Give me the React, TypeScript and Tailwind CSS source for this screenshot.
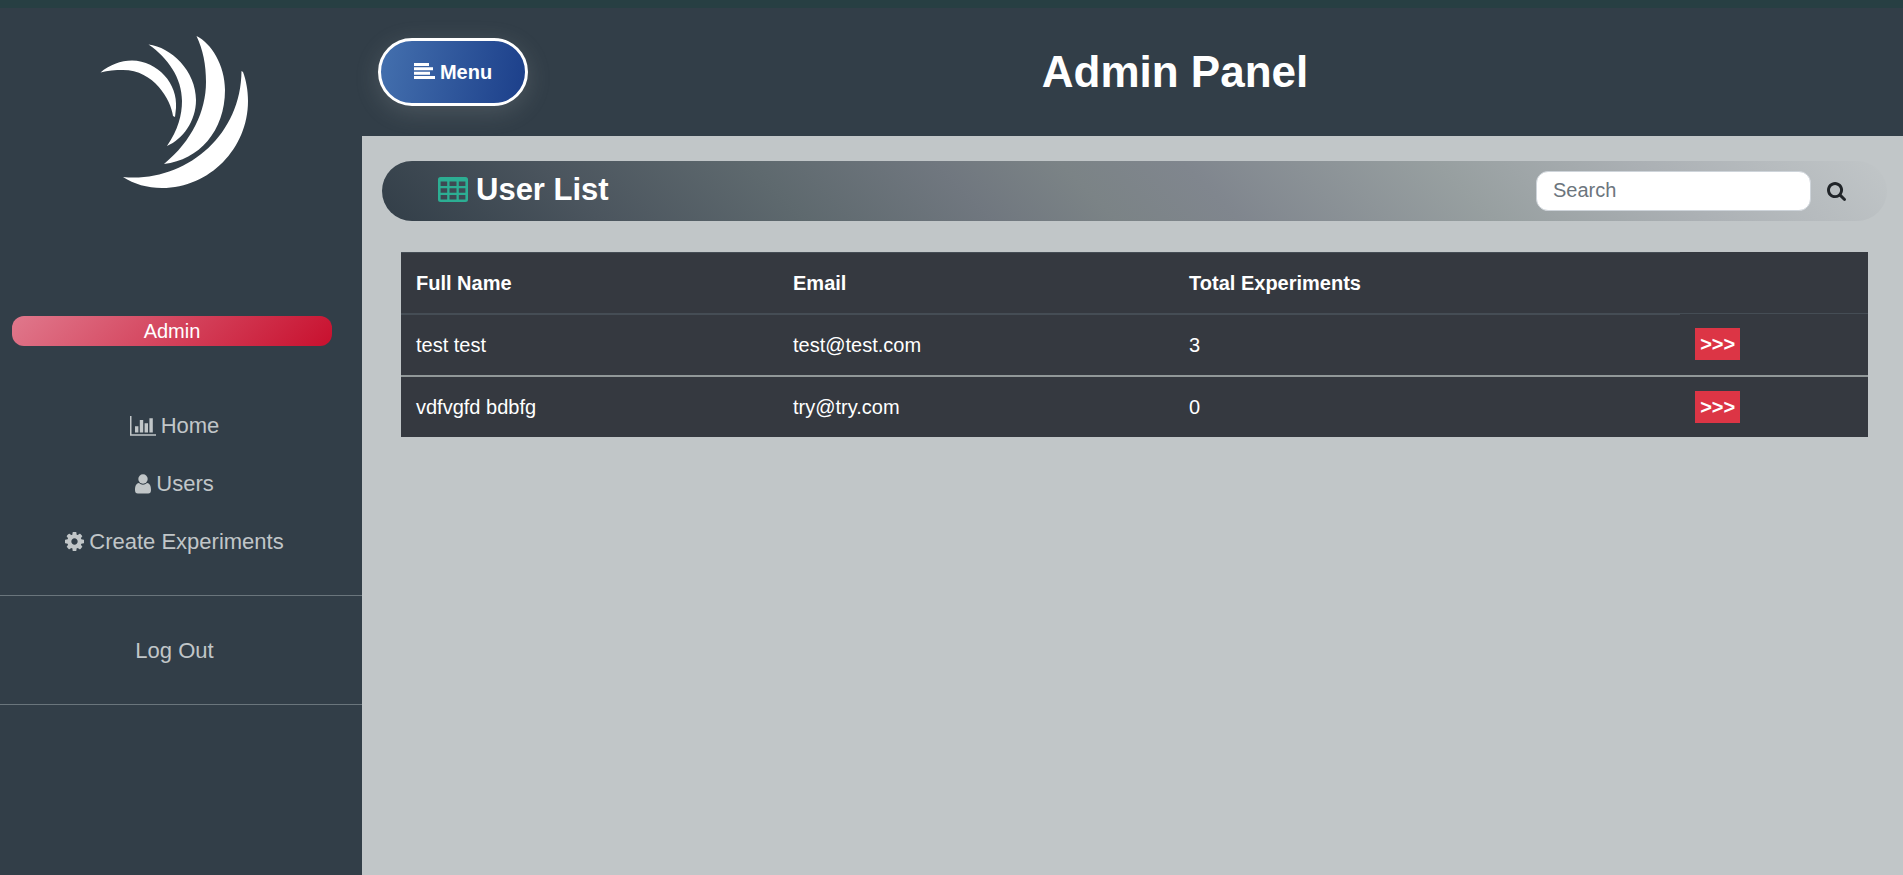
const users = [
  { name: "test test", email: "test@test.com", total: 3 },
  { name: "vdfvgfd bdbfg", email: "try@try.com", total: 0 },
];

function ChartIcon() {
  return (
    <svg viewBox="0 0 26 20" className="h-5 w-[26px]" fill="currentColor" aria-hidden="true">
      <path d="M0 0h1.500v18.200h24.500v1.600h-26zM5 10.200h3.400v6.300h-3.400zM9.800 3.900h3.400v12.600h-3.400zM14.600 7.200h3.400v9.300h-3.400zM19.400 2.200h3.400v14.300h-3.400z" />
    </svg>
  );
}

function UserIcon() {
  return (
    <svg viewBox="0 0 16 20" className="h-5 w-4" fill="currentColor" aria-hidden="true">
      <circle cx="8" cy="5" r="4.700" />
      <path d="M3.900 9Q8 12.600 12.100 9C15 9.300 16 12.500 16 16C16 18.300 15 19.600 13.200 19.600H2.800C1 19.600 0 18.300 0 16C0 12.500 1 9.300 3.900 9Z" />
    </svg>
  );
}

function GearIcon() {
  return (
    <svg viewBox="0 128 1536 1536" className="size-[19px]" fill="currentColor" aria-hidden="true">
      <path d="M1024 896q0-106-75-181t-181-75-181 75-75 181 75 181 181 75 181-75 75-181zM1536 787v222q0 12-8 23t-20 13l-185 28q-19 54-39 91 35 50 107 138 10 12 10 25t-9 23q-27 37-99 108t-94 71q-12 0-26-9l-138-108q-44 23-91 38-16 136-29 186-7 28-36 28h-222q-14 0-24.500-8.500t-11.500-21.500l-28-184q-49-16-90-37l-141 107q-10 9-25 9-14 0-25-11-126-114-165-168-7-10-7-23 0-12 8-23 15-21 51-66.500t54-70.500q-27-50-41-99l-183-27q-13-2-21-12.500t-8-23.500v-222q0-12 8-23t19-13l186-28q14-46 39-92-40-57-107-138-10-12-10-24 0-10 9-23 26-36 98.500-107.500t94.500-71.500q13 0 26 10l138 107q44-23 91-38 16-136 29-186 7-28 36-28h222q14 0 24.500 8.500t11.500 21.500l28 184q49 16 90 37l142-107q9-9 24-9 13 0 25 10 129 119 165 170 7 8 7 22 0 12-8 23-15 21-51 66.500t-54 70.500q26 50 41 98l183 28q13 2 21 12.500t8 23.500z" />
    </svg>
  );
}

function AlignLeftIcon() {
  return (
    <svg viewBox="0 0 21 18" className="h-[18px] w-[21px]" fill="currentColor" aria-hidden="true">
      <path d="M0 0h15v3h-15zM0 4.300h19v3h-19zM0 8.700h16v3h-16zM0 13h21v3h-21z" />
    </svg>
  );
}

function TableIcon() {
  return (
    <svg viewBox="0 0 30 25" className="h-[25px] w-[30px] text-[#2cae93]" fill="currentColor" aria-hidden="true">
      <path
        fillRule="evenodd"
        d="M2.500 0h25a2.500 2.500 0 0 1 2.500 2.500v20a2.500 2.500 0 0 1-2.500 2.500h-25a2.500 2.500 0 0 1-2.500-2.500v-20a2.500 2.500 0 0 1 2.500-2.500zM2.600 4.600v4.400h6.600v-4.400zM11.500 4.600v4.400h7v-4.400zM20.800 4.600v4.400h6.600v-4.400zM2.600 11.300v4.500h6.600v-4.500zM11.500 11.300v4.500h7v-4.500zM20.800 11.300v4.500h6.600v-4.500zM2.600 18v4.500h6.600v-4.500zM11.500 18v4.500h7v-4.500zM20.800 18v4.500h6.600v-4.500z"
      />
    </svg>
  );
}

function SearchIcon() {
  return (
    <svg viewBox="0 128 1664 1664" className="size-[19px]" fill="currentColor" aria-hidden="true">
      <path d="M1152 832q0-185-131.500-316.500t-316.500-131.500-316.500 131.500-131.500 316.500 131.500 316.500 316.500 131.500 316.500-131.500 131.500-316.500zM1664 1664q0 52-38 90t-90 38q-54 0-90-38l-343-342q-179 124-399 124-143 0-273.500-55.500t-225-150-150-225-55.500-273.500 55.500-273.500 150-225 225-150 273.500-55.500 273.500 55.500 225 150 150 225 55.500 273.500q0 220-124 399l343 343q37 37 37 90z" />
    </svg>
  );
}

function Logo() {
  return (
    <svg viewBox="0 0 200 210" className="h-[210px] w-[200px]" fill="#fff" role="img" aria-label="Logo">
      <path d="M20.500 72.500C29 65 41 60.500 52 60.500C78 61 98 84 96 108L95 117L93 116C91 100 74 70 43 70C35 70 28 70.500 20.500 72.500Z" />
      <path d="M68.500 44.500C91 47 116 71 116 100C116 121 103 139 87 146C98 130 102 115 102 101C102 78 88 58 68.500 44.500Z" />
      <path d="M116.500 36C131 43 145 65 145 90C145 131 119 160 84 164C112 141 126 111 126 82C126 64 123 50 116.500 36Z" />
      <path d="M161.500 71L163 72C166 80 168 90 168 101C168 148 130 188 82 188C67 188 54 184 43 177C103 183 161 138 161.500 71Z" />
    </svg>
  );
}

export default function App() {
  return (
    <div className="flex min-h-screen flex-col bg-[#c1c6c8] font-['Liberation_Sans',Arial,sans-serif] text-xl leading-[30px] text-white">
      <div className="h-2 bg-[#273f43]" />
      <div className="flex flex-1">
        <aside className="flex w-[362px] shrink-0 flex-col bg-[#323e48]">
          <div className="-mt-2 pl-20">
            <Logo />
          </div>
          <div className="mt-[106px] mr-[30px] ml-3 rounded-xl bg-linear-[135deg,#e0788c,#c8102e] text-center">
            Admin
          </div>
          <nav className="mt-[63px] flex flex-col text-[22px] leading-[33px] text-[#c1c6c8]">
            <div className="flex flex-col items-center gap-[25px] pr-[13px] pb-[37px]">
              <a href="#home" className="flex items-center gap-[5px]">
                <ChartIcon />
                Home
              </a>
              <a href="#users" className="flex items-center gap-[5px]">
                <UserIcon />
                Users
              </a>
              <a href="#create" className="flex items-center gap-[5px]">
                <GearIcon />
                Create Experiments
              </a>
            </div>
            <div className="border-y border-[#6a757c] pt-[38px] pr-[13px] pb-[37px] text-center">
              <a href="#logout" className="block">Log Out</a>
            </div>
          </nav>
        </aside>
        <div className="flex min-w-0 flex-1 flex-col">
          <header className="flex h-32 items-center bg-[#323e48] px-4">
            <button
              type="button"
              className="flex h-[68px] w-[150px] items-center justify-center gap-[5px] rounded-[34px] border-3 border-white bg-linear-[100deg,#4470ae,#1c3f8a] font-bold shadow-[0_6px_24px_rgba(193,198,200,0.18)]"
            >
              <AlignLeftIcon />
              Menu
            </button>
            <h1 className="flex-1 pr-[65px] text-center text-[44px] leading-[52px] font-bold">Admin Panel</h1>
          </header>
          <main className="pt-[25px] pr-4 pl-5">
            <section className="flex h-[60px] items-center justify-between rounded-[30px] bg-linear-[45deg,#323e48,#4b555e_14%,#5e696e_27%,#70777f_39%,#7b8386_47%,#80868e_55%,#979fa0_71%,#abb0b4_84%,#c1c6c8] pr-[41px] pl-14">
              <h2 className="flex items-center gap-2 pb-[3px] text-[31px] leading-[38px] font-bold">
                <TableIcon />
                User List
              </h2>
              <form className="flex items-center gap-4" onSubmit={(e) => e.preventDefault()}>
                <input
                  type="search"
                  aria-label="Search"
                  placeholder="Search"
                  className="h-10 w-[275px] rounded-xl border border-[#ced4da] bg-white px-4 pb-[2px] text-[#495057] placeholder:text-[#6c757d]"
                />
                <button type="submit" aria-label="Search" className="text-[#212529]">
                  <SearchIcon />
                </button>
              </form>
            </section>
            <div className="mt-[31px] px-[19px]">
              <table className="w-full table-fixed border-collapse bg-[#353940] text-left">
                <colgroup>
                  <col className="w-[25.7%]" />
                  <col className="w-[27%]" />
                  <col className="w-[34.5%]" />
                  <col />
                </colgroup>
                <thead>
                  <tr className="h-[61px]">
                    <th className="border-t border-b-2 border-[#454d55] px-[15px]">Full Name</th>
                    <th className="border-t border-b-2 border-[#454d55] px-[15px]">Email</th>
                    <th className="border-t border-b-2 border-[#454d55] px-[15px]">Total Experiments</th>
                    <td className="border-b border-[#454d55]" />
                  </tr>
                </thead>
                <tbody>
                  {users.map((user) => (
                    <tr key={user.email} className="h-[62px] border-b-2 border-[#919899] last:h-[61px] last:border-b-0">
                      <td className="px-[15px]">{user.name}</td>
                      <td className="px-[15px]">{user.email}</td>
                      <td className="px-[15px]">{user.total}</td>
                      <td className="px-[15px]">
                        <button
                          type="button"
                          aria-label={`Open ${user.name}`}
                          className="block h-8 w-[45px] bg-[#dc3545] text-center font-bold"
                        >
                          &gt;&gt;&gt;
                        </button>
                      </td>
                    </tr>
                  ))}
                </tbody>
              </table>
            </div>
          </main>
        </div>
      </div>
    </div>
  );
}
